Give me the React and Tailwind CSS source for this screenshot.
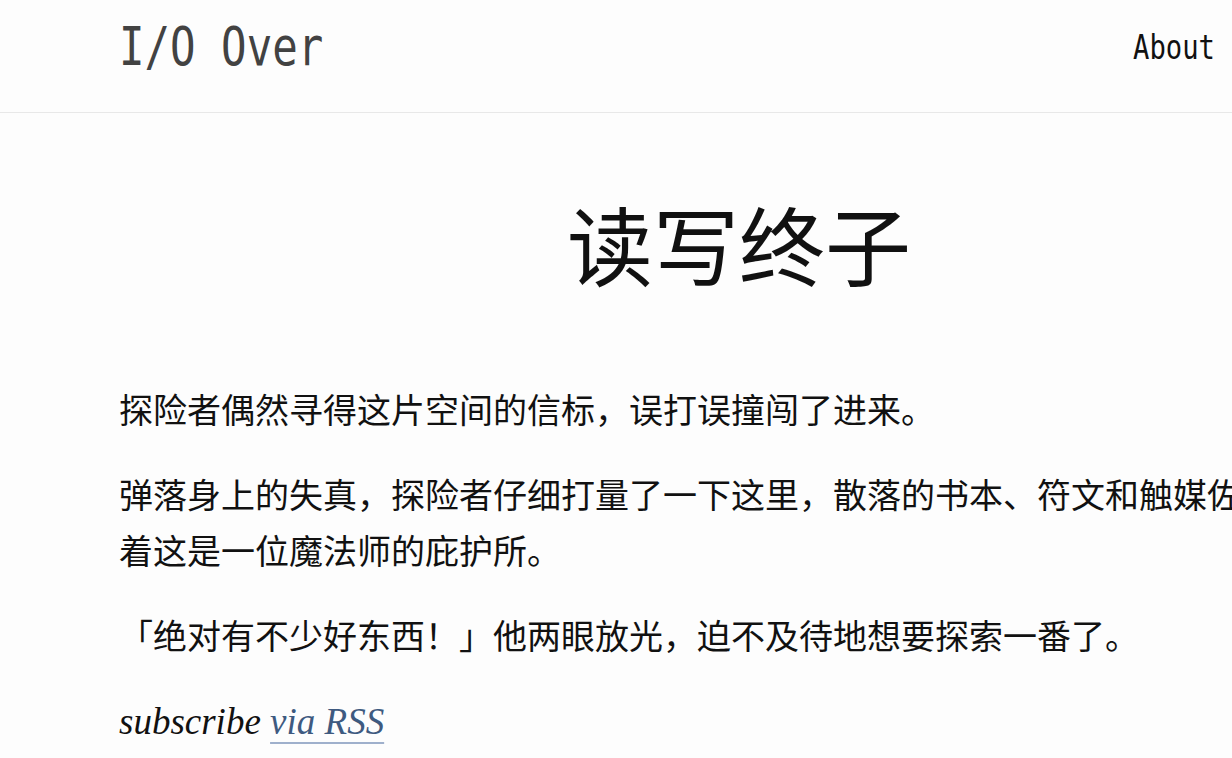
const mono = { fontFamily: '"DejaVu Sans Mono", "Liberation Mono", monospace' };

export default function App() {
  return (
    <div className="min-h-screen w-full overflow-hidden bg-[#fdfdfd] text-[#111]">
      {/* Header */}
      <header className="h-[113px] border-b border-[#e8e8e8]">
        <div className="ml-[119px] flex w-[1096px] items-start justify-between">
          <a href="#" className="mt-[14px] block w-[210px] text-[53px] leading-[66px] text-[#424242]" style={mono}>
            <span className="inline-block origin-left scale-x-[0.8] whitespace-nowrap">I/O Over</span>
          </a>
          <nav className="mt-[25px] flex">
            <a href="#" className="block w-[82px] text-[34px] leading-[44px] text-[#111]" style={mono}>
              <span className="inline-block origin-left scale-x-[0.8] whitespace-nowrap">About</span>
            </a>
          </nav>
        </div>
      </header>

      {/* Content */}
      <main className="ml-[119px] w-[1240px]" style={{ fontFamily: '"Noto Sans CJK SC", "Noto Sans", sans-serif' }}>
        <h1 className="mt-[75px] mb-[83px] text-center text-[86px] font-normal leading-[110px]">读写终子</h1>

        <div className="w-[1170px] text-[34px] leading-[56px]">
          <p className="mb-[29px]">探险者偶然寻得这片空间的信标，误打误撞闯了进来。</p>
          <p className="mb-[29px]">弹落身上的失真，探险者仔细打量了一下这里，散落的书本、符文和触媒佐证着这是一位魔法师的庇护所。</p>
          <p className="mb-[31px]">「绝对有不少好东西！」他两眼放光，迫不及待地想要探索一番了。</p>
          <p className="text-[37px] italic" style={{ fontFamily: '"Liberation Serif", serif' }}>
            subscribe{' '}
            <a href="#" className="text-[#3e5a80] underline decoration-[#9fb0cc] decoration-2 underline-offset-[8px]">
              via RSS
            </a>
          </p>
        </div>
      </main>
    </div>
  );
}
